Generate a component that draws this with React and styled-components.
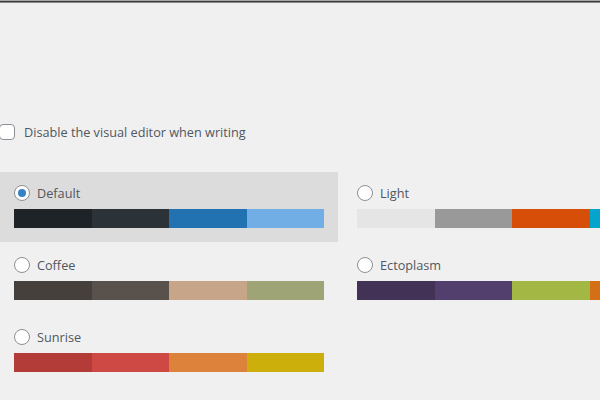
import React, { useState } from "react"
import styled, { createGlobalStyle } from "styled-components"

const GlobalStyle = createGlobalStyle`
  html, body {
    margin: 0;
    padding: 0;
    background: #f0f0f1;
    overflow: hidden;
  }
  body {
    font-family: "Open Sans", "Noto Sans", sans-serif;
    color: #3c434a;
  }
`

const SCHEMES = [
  { id: "default", name: "Default", colors: ["#1d2327", "#2c3338", "#2271b1", "#72aee6"] },
  { id: "light", name: "Light", colors: ["#e5e5e5", "#999999", "#d64e07", "#04a4cc"] },
  { id: "coffee", name: "Coffee", colors: ["#46403c", "#59524c", "#c7a589", "#9ea476"] },
  { id: "ectoplasm", name: "Ectoplasm", colors: ["#413256", "#523f6d", "#a3b745", "#d46f15"] },
  { id: "sunrise", name: "Sunrise", colors: ["#b43c38", "#cf4944", "#dd823b", "#ccaf0b"] },
]

const Page = styled.div`
  width: 600px;
  height: 400px;
  overflow: hidden;
  border-top: 1px solid #a7a7a7;
  box-sizing: border-box;
`

const TopRule = styled.div`
  height: 1px;
  background: #3a3a3a;
  border-bottom: 1px solid #8a8a8a;
`

const Content = styled.div`
  padding-top: 121px;
`

const CheckRow = styled.label`
  display: flex;
  align-items: center;
  gap: 9px;
  height: 16px;
  font-size: 12.7px;
  color: #50575e;
`

const Checkbox = styled.input.attrs({ type: "checkbox" })`
  appearance: none;
  margin: 0 0 0 -1px;
  width: 16px;
  height: 16px;
  border: 1px solid #8c8f94;
  border-radius: 4px;
  background: #fff;
  box-sizing: border-box;
`

const SchemeGrid = styled.fieldset`
  display: grid;
  grid-template-columns: 338px 338px;
  column-gap: 5px;
  row-gap: 2px;
  margin: 32px 0 0 0;
  padding: 0;
  border: 0;
  width: 681px;
`

const SchemeCell = styled.div`
  padding: 12px 14px 14px;
  background: ${({ $selected }) => ($selected ? "#dcdcdd" : "transparent")};
  cursor: pointer;
`

const RadioRow = styled.label`
  display: flex;
  align-items: center;
  gap: 7px;
  height: 17px;
  font-size: 12.7px;
  color: #50575e;
`

const Radio = styled.input.attrs({ type: "radio" })`
  appearance: none;
  margin: 0;
  width: 16px;
  height: 16px;
  border: 1px solid #8c8f94;
  border-radius: 50%;
  background: #fff;
  box-sizing: border-box;
  display: grid;
  place-items: center;
  &:checked::before {
    content: "";
    width: 8px;
    height: 8px;
    border-radius: 50%;
    background: #3582c4;
  }
`

const Palette = styled.div`
  display: flex;
  width: 310px;
  height: 19px;
  margin-top: 8px;
`

const Swatch = styled.div`
  flex: 1;
  background: ${({ $color }) => $color};
`

const App = () => {
  const [scheme, setScheme] = useState("default")

  return (
    <>
      <GlobalStyle />
      <Page>
        <TopRule />
        <Content>
          <CheckRow>
            <Checkbox />
            Disable the visual editor when writing
          </CheckRow>
          <SchemeGrid>
            {SCHEMES.map(item => (
              <SchemeCell
                key={item.id}
                $selected={scheme === item.id}
                onClick={() => setScheme(item.id)}
              >
                <RadioRow>
                  <Radio
                    name="admin_color"
                    checked={scheme === item.id}
                    onChange={() => setScheme(item.id)}
                  />
                  {item.name}
                </RadioRow>
                <Palette>
                  {item.colors.map(c => (
                    <Swatch key={c} $color={c} />
                  ))}
                </Palette>
              </SchemeCell>
            ))}
          </SchemeGrid>
        </Content>
      </Page>
    </>
  )
}

export default App
